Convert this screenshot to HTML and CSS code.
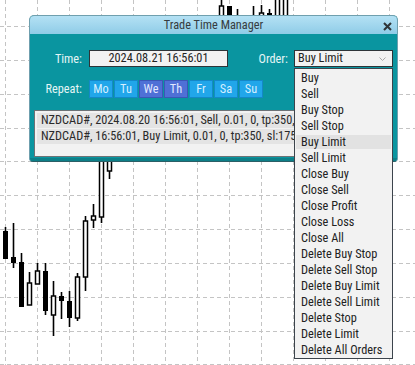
FILE: index.html
```html
<!DOCTYPE html>
<html lang="en">
<head>
  <meta charset="UTF-8" />
  <meta name="viewport" content="width=device-width, initial-scale=1.0" />
  <title>Trade Time Manager</title>
  <link rel="stylesheet" href="styles.css">
</head>
<body>

<svg class="chart" width="415" height="365" viewBox="0 0 415 365">
  <g class="grid">
    <line x1="5.5" y1="0" x2="5.5" y2="365" />
    <line x1="37.5" y1="0" x2="37.5" y2="365" />
    <line x1="69.5" y1="0" x2="69.5" y2="365" />
    <line x1="101.5" y1="0" x2="101.5" y2="365" />
    <line x1="133.5" y1="0" x2="133.5" y2="365" />
    <line x1="165.5" y1="0" x2="165.5" y2="365" />
    <line x1="197.5" y1="0" x2="197.5" y2="365" />
    <line x1="229.5" y1="0" x2="229.5" y2="365" />
    <line x1="261.5" y1="0" x2="261.5" y2="365" />
    <line x1="293.5" y1="0" x2="293.5" y2="365" />
    <line x1="325.5" y1="0" x2="325.5" y2="365" />
    <line x1="357.5" y1="0" x2="357.5" y2="365" />
    <line x1="389.5" y1="0" x2="389.5" y2="365" />
    <line x1="0" y1="26.5" x2="415" y2="26.5" />
    <line x1="0" y1="60.5" x2="415" y2="60.5" />
    <line x1="0" y1="94.5" x2="415" y2="94.5" />
    <line x1="0" y1="128.5" x2="415" y2="128.5" />
    <line x1="0" y1="161.5" x2="415" y2="161.5" />
    <line x1="0" y1="195.5" x2="415" y2="195.5" />
    <line x1="0" y1="229.5" x2="415" y2="229.5" />
    <line x1="0" y1="263.5" x2="415" y2="263.5" />
    <line x1="0" y1="297.5" x2="415" y2="297.5" />
    <line x1="0" y1="331.5" x2="415" y2="331.5" />
    <line x1="0" y1="364.5" x2="415" y2="364.5" />
  </g>
  <g class="wicks">
    <line x1="5.5" y1="227" x2="5.5" y2="259" />
    <line x1="13.5" y1="223" x2="13.5" y2="268" />
    <line x1="21.5" y1="253" x2="21.5" y2="307" />
    <line x1="29.5" y1="272" x2="29.5" y2="305" />
    <line x1="37.5" y1="263" x2="37.5" y2="284" />
    <line x1="45.5" y1="263" x2="45.5" y2="315" />
    <line x1="53.5" y1="281" x2="53.5" y2="336" />
    <line x1="61.5" y1="292" x2="61.5" y2="319" />
    <line x1="69.5" y1="291" x2="69.5" y2="327" />
    <line x1="77.5" y1="273" x2="77.5" y2="321" />
    <line x1="85.5" y1="216" x2="85.5" y2="291" />
    <line x1="93.5" y1="204" x2="93.5" y2="228" />
    <line x1="101.5" y1="150" x2="101.5" y2="223" />
    <line x1="109.5" y1="150" x2="109.5" y2="179" />
    <line x1="221.5" y1="0" x2="221.5" y2="15" />
    <line x1="237.5" y1="9" x2="237.5" y2="16" />
    <line x1="253.5" y1="6" x2="253.5" y2="16" />
    <line x1="261.5" y1="5" x2="261.5" y2="16" />
    <line x1="269.5" y1="9" x2="269.5" y2="16" />
  </g>
  <g class="bull">
    <rect x="27.5" y="283" width="4" height="22" />
    <rect x="35.5" y="271" width="4" height="13" />
    <rect x="51.5" y="296" width="4" height="19" />
    <rect x="75.5" y="277" width="4" height="41" />
    <rect x="83.5" y="221" width="4" height="56" />
    <rect x="91.5" y="216" width="4" height="4" />
    <rect x="99.5" y="140" width="4" height="77" />
    <rect x="107.5" y="140" width="4" height="31" />
    <rect x="219.5" y="6" width="4" height="14" />
    <rect x="259.5" y="13" width="4" height="7" />
    <rect x="275.5" y="-2" width="4" height="22" />
    <rect x="283.5" y="-2" width="4" height="22" />
  </g>
  <g class="bear">
    <rect x="3" y="231" width="5" height="28" />
    <rect x="11" y="257" width="5" height="6" />
    <rect x="19" y="262" width="5" height="45" />
    <rect x="43" y="271" width="5" height="40" />
    <rect x="59" y="296" width="5" height="5" />
    <rect x="67" y="301" width="5" height="17" />
    <rect x="227" y="6" width="5" height="14" />
    <rect x="267" y="13" width="5" height="7" />
  </g>
</svg>

<div class="dialog">
  <div class="title">
    Trade Time Manager
    <svg class="close" width="9" height="9" viewBox="0 0 9 9">
      <path d="M1 1 L8 8 M8 1 L1 8" />
    </svg>
  </div>

  <div class="panel">
    <div class="row">
      <span class="label">Time:</span>
      <div class="field time">2024.08.21 16:56:01</div>
      <span class="label order-label">Order:</span>
      <div class="combo">
        <div class="field select">
          Buy Limit
          <svg class="chevron" width="7" height="4" viewBox="0 0 7 4">
            <path d="M0.5 0.5 L3.5 3.5 L6.5 0.5" />
          </svg>
        </div>
        <ul class="menu">
          <li>Buy</li>
          <li>Sell</li>
          <li>Buy Stop</li>
          <li>Sell Stop</li>
          <li class="active">Buy Limit</li>
          <li>Sell Limit</li>
          <li>Close Buy</li>
          <li>Close Sell</li>
          <li>Close Profit</li>
          <li>Close Loss</li>
          <li>Close All</li>
          <li>Delete Buy Stop</li>
          <li>Delete Sell Stop</li>
          <li>Delete Buy Limit</li>
          <li>Delete Sell Limit</li>
          <li>Delete Stop</li>
          <li>Delete Limit</li>
          <li>Delete All Orders</li>
        </ul>
      </div>
    </div>

    <div class="row days-row">
      <span class="label">Repeat:</span>
      <div class="days">
        <span class="day">Mo</span>
        <span class="day">Tu</span>
        <span class="day on">We</span>
        <span class="day on">Th</span>
        <span class="day">Fr</span>
        <span class="day">Sa</span>
        <span class="day">Su</span>
      </div>
    </div>

    <div class="log">
      <div class="log-row">NZDCAD#, 2024.08.20 16:56:01, Sell, 0.01, 0, tp:350, sl:175</div>
      <div class="log-row">NZDCAD#, 16:56:01, Buy Limit, 0.01, 0, tp:350, sl:175, We,Th</div>
    </div>
  </div>
</div>

</body>
</html>
```

FILE: styles.css
```css
* {
  box-sizing: border-box;
  margin: 0;
  padding: 0;
}
body {
  position: relative;
  width: 415px;
  height: 365px;
  overflow: hidden;
  background: #fff;
  font-family: 'Roboto Condensed', 'Noto Sans ExtraCondensed', 'Liberation Sans', sans-serif;
  font-size: 12.3px;
  color: #2a2a2a;
}
.chart {
  position: absolute;
  left: 0;
  top: 0;
  display: block;
}
.grid line {
  stroke: #c4c4c4;
  stroke-width: 1;
  stroke-dasharray: 4 3;
}
.wicks line {
  stroke: #000;
  stroke-width: 1.6;
}
.bull rect {
  fill: #fff;
  stroke: #000;
  stroke-width: 1.5;
}
.bear rect {
  fill: #000;
}

.dialog {
  position: absolute;
  left: 29px;
  top: 15px;
  width: 369px;
  height: 147px;
  border: 1px solid #6f9fae;
  border-bottom-color: #2b5f66;
  border-radius: 5px 5px 4px 4px;
  background: #0a95a0;
}
.title {
  position: relative;
  height: 18px;
  line-height: 18px;
  text-align: center;
  color: #363c40;
  background: linear-gradient(#b4e1f4, #8fcce7);
  border-radius: 4px 4px 0 0;
}
.close {
  position: absolute;
  right: 5px;
  top: 6px;
}
.close path {
  stroke: #2f3538;
  stroke-width: 2.1;
  fill: none;
}
.panel {
  height: 127px;
  padding: 16px 4px 0 4px;
  border-bottom: 3px solid #0d7f88;
  border-radius: 0 0 3px 3px;
}
.row {
  display: flex;
  align-items: center;
  height: 17px;
}
.label {
  flex: none;
  width: 48px;
  margin-right: 7px;
  text-align: right;
  color: #e4f5f6;
}
.field {
  height: 17px;
  line-height: 15px;
  background: #f2f2f2;
  border: 1px solid #2e3438;
  color: #222;
}
.time {
  flex: none;
  width: 139px;
  text-align: center;
}
.order-label {
  width: 54px;
  margin-left: 6px;
  margin-right: 6px;
}
.combo {
  position: relative;
  flex: none;
  width: 99px;
}
.select {
  display: flex;
  align-items: center;
  justify-content: space-between;
  padding: 0 6px 0 3px;
}
.chevron path {
  stroke: #a8a8a8;
  stroke-width: 1;
  fill: none;
}
.menu {
  position: absolute;
  left: 0;
  top: 18px;
  z-index: 2;
  width: 99px;
  list-style: none;
  padding: 1px 1px 0;
  background: #f2f2f2;
  border: 1px solid #3c444c;
}
.menu li {
  height: 16px;
  line-height: 16px;
  padding-left: 5px;
  white-space: nowrap;
  color: #222;
}
.menu li.active {
  background: #e2e2e2;
  border-top: 1px solid #f2f2f2;
  border-bottom: 1px solid #f2f2f2;
  line-height: 14px;
}
.days-row {
  height: 18px;
  margin-top: 13px;
}
.days {
  display: flex;
  gap: 1px;
}
.day {
  width: 24px;
  height: 18px;
  line-height: 16px;
  text-align: center;
  color: #d6f0ff;
  background: #21a6ea;
  border: 1px solid #1488c8;
}
.day.on {
  color: #e2e8ff;
  background: #4f70d6;
  border-color: #3b57b6;
}
/* the list runs on under the open dropdown, so only its visible part is kept */
.log {
  width: 261px;
  height: 47px;
  margin-top: 12px;
  padding: 2px 0 2px 2px;
  overflow: hidden;
  white-space: nowrap;
  background: #f2f2f2;
  border: 1px solid #6c7276;
}
.log-row {
  height: 15px;
  line-height: 15px;
  margin-bottom: 1px;
  padding-left: 4px;
  overflow: hidden;
  background: #e4e4e4;
  color: #2a2a2a;
}
```
